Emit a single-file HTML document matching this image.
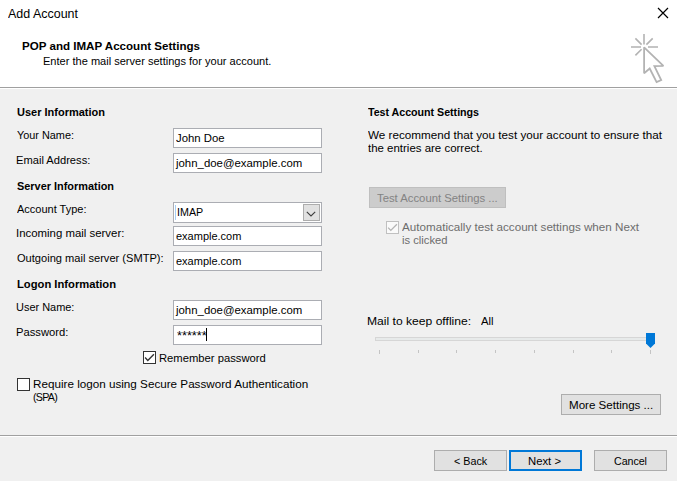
<!DOCTYPE html>
<html><head><meta charset="utf-8"><title>Add Account</title>
<style>
html,body{margin:0;padding:0}
body{width:677px;height:481px;overflow:hidden;background:#f0f0f0;font-family:"Liberation Sans",sans-serif;position:relative;color:#000}
.abs{position:absolute;box-sizing:border-box}
.t{position:absolute;white-space:pre;line-height:16px;height:16px;transform-origin:0 0}
.hdr{left:0;top:0;width:677px;height:87px;background:#fff}
.hl{left:0;width:677px;height:1px}
.inp{left:173px;width:149px;height:20px;background:#fff;border:1px solid #abadb3}
.btn{background:#e1e1e1;border:1px solid #adadad}
.cb{width:13px;height:13px;background:#fff;border:1px solid #333}
</style></head>
<body>
<div class="abs hdr"></div>
<div class="abs hl" style="top:87px;background:#a0a0a0"></div>
<div class="abs hl" style="top:88px;background:#fff"></div>
<div class="abs hl" style="top:436px;background:#fff"></div>
<div class="abs hl" style="top:435px;background:#a0a0a0"></div>
<div class="abs inp" style="top:128px"></div>
<div class="abs inp" style="top:153px"></div>
<div class="abs inp" style="top:226px"></div>
<div class="abs inp" style="top:251px"></div>
<div class="abs inp" style="top:300px"></div>
<div class="abs inp" style="top:325px"></div>
<div class="abs inp" style="top:202px;height:21px"></div>
<div class="abs btn" style="left:303px;top:204px;width:17px;height:17px"></div>
<svg class="abs" style="left:303px;top:204px" width="17" height="17" viewBox="0 0 17 17"><path d="M3.8 7.8 L8 12 L12.2 7.8" fill="none" stroke="#3c3c3c" stroke-width="1.1"/></svg>
<div class="abs" style="left:175px;top:205px;width:1px;height:15px;background:#a6cff5"></div>
<div class="abs" style="left:206px;top:328px;width:1px;height:13px;background:#000"></div>
<div class="abs cb" style="left:143px;top:351px"></div>
<svg class="abs" style="left:143px;top:351px" width="13" height="13" viewBox="0 0 13 13"><path d="M2.1 6.6 L4.8 9.4 L10.9 3.3" fill="none" stroke="#333" stroke-width="1.4"/></svg>
<div class="abs cb" style="left:17px;top:378px"></div>
<div class="abs cb" style="left:386px;top:221px;border-color:#c0c0c0;background:#fafafa"></div>
<svg class="abs" style="left:386px;top:221px" width="13" height="13" viewBox="0 0 13 13"><path d="M2.1 6.6 L4.8 9.4 L10.9 3.3" fill="none" stroke="#b4b4b4" stroke-width="1.3"/></svg>
<div class="abs" style="left:369px;top:187px;width:137px;height:21px;background:#cccccc;border:1px solid #bfbfbf"></div>
<div class="abs btn" style="left:561px;top:394px;width:100px;height:21px"></div>
<div class="abs btn" style="left:434px;top:450px;width:73px;height:21px"></div>
<div class="abs btn" style="left:509px;top:450px;width:73px;height:21px;border:2px solid #0078d7"></div>
<div class="abs btn" style="left:594px;top:450px;width:73px;height:21px"></div>
<div class="abs" style="left:375px;top:337px;width:274px;height:4px;background:#e7eaea;border:1px solid #d6d6d6"></div>
<div class="abs" style="left:379px;top:350px;width:1px;height:4px;background:#c4c4c4"></div>
<div class="abs" style="left:418px;top:350px;width:1px;height:3px;background:#c4c4c4"></div>
<div class="abs" style="left:456px;top:350px;width:1px;height:3px;background:#c4c4c4"></div>
<div class="abs" style="left:495px;top:350px;width:1px;height:3px;background:#c4c4c4"></div>
<div class="abs" style="left:534px;top:350px;width:1px;height:3px;background:#c4c4c4"></div>
<div class="abs" style="left:573px;top:350px;width:1px;height:3px;background:#c4c4c4"></div>
<div class="abs" style="left:611px;top:350px;width:1px;height:3px;background:#c4c4c4"></div>
<div class="abs" style="left:650px;top:350px;width:1px;height:4px;background:#c4c4c4"></div>
<svg class="abs" style="left:646px;top:333px" width="10" height="16" viewBox="0 0 10 16"><path d="M0 0 H9 V10.5 L4.5 15 L0 10.5 Z" fill="#0078d7"/></svg>
<svg class="abs" style="left:657px;top:7px" width="12" height="12" viewBox="0 0 12 12"><path d="M1 1 L11 11 M11 1 L1 11" fill="none" stroke="#000" stroke-width="1.2"/></svg>
<svg class="abs" style="left:625px;top:28px" width="47" height="60" viewBox="625 28 47 60">
<g fill="none" stroke="#b3b3b3" stroke-width="1.6">
<path d="M644 34 V44.5 M631 47 H641 M648 47 H658 M635.4 38.4 L641.6 44.6 M652.7 38.4 L646.4 44.6 M635.4 55.4 L641.6 49.3"/>
<path d="M644.1 47.3 V73.2 L649.7 68.5 L656.6 82.1 L661.2 80 L654.4 66.1 L663.4 65.9 Z" fill="#fff" stroke-linejoin="miter" stroke-miterlimit="2" stroke-width="1.8"/>
</g></svg>
<span class="t" style="left:8.00px;top:5.67px;font-size:12.5px;transform:scaleX(0.9971);">Add Account</span>
<span class="t" style="left:22.00px;top:37.99px;font-size:11px;transform:scaleX(1.0526);font-weight:bold;">POP and IMAP Account Settings</span>
<span class="t" style="left:42.70px;top:53.19px;font-size:11px;transform:scaleX(1.0038);">Enter the mail server settings for your account.</span>
<span class="t" style="left:17.00px;top:104.02px;font-size:11.5px;transform:scaleX(0.9564);font-weight:bold;">User Information</span>
<span class="t" style="left:17.00px;top:127.02px;font-size:11.5px;transform:scaleX(0.9451);">Your Name:</span>
<span class="t" style="left:16.20px;top:152.02px;font-size:11.5px;transform:scaleX(0.9687);">Email Address:</span>
<span class="t" style="left:17.00px;top:178.02px;font-size:11.5px;transform:scaleX(0.9487);font-weight:bold;">Server Information</span>
<span class="t" style="left:17.00px;top:201.02px;font-size:11.5px;transform:scaleX(0.9564);">Account Type:</span>
<span class="t" style="left:16.20px;top:225.02px;font-size:11.5px;transform:scaleX(0.9918);">Incoming mail server:</span>
<span class="t" style="left:17.00px;top:250.02px;font-size:11.5px;transform:scaleX(0.9638);">Outgoing mail server (SMTP):</span>
<span class="t" style="left:17.00px;top:276.02px;font-size:11.5px;transform:scaleX(0.9746);font-weight:bold;">Logon Information</span>
<span class="t" style="left:16.20px;top:299.02px;font-size:11.5px;transform:scaleX(0.9518);">User Name:</span>
<span class="t" style="left:16.20px;top:324.02px;font-size:11.5px;transform:scaleX(0.9760);">Password:</span>
<span class="t" style="left:176.00px;top:129.72px;font-size:11.5px;transform:scaleX(0.9891);">John Doe</span>
<span class="t" style="left:175.50px;top:154.82px;font-size:11.5px;transform:scaleX(0.9907);">john_doe@example.com</span>
<span class="t" style="left:176.50px;top:203.72px;font-size:11.5px;transform:scaleX(0.9316);">IMAP</span>
<span class="t" style="left:176.20px;top:227.72px;font-size:11.5px;transform:scaleX(0.9563);">example.com</span>
<span class="t" style="left:176.20px;top:252.62px;font-size:11.5px;transform:scaleX(0.9563);">example.com</span>
<span class="t" style="left:175.50px;top:302.02px;font-size:11.5px;transform:scaleX(0.9907);">john_doe@example.com</span>
<span class="t" style="left:176.80px;top:327.94px;font-size:12px;transform:scaleX(1.0595);">******</span>
<span class="t" style="left:158.70px;top:349.62px;font-size:11.5px;transform:scaleX(0.9772);">Remember password</span>
<span class="t" style="left:32.80px;top:375.82px;font-size:11.5px;transform:scaleX(1.0153);">Require logon using Secure Password Authentication</span>
<span class="t" style="left:32.80px;top:389.02px;font-size:11.5px;transform:scaleX(0.9300);letter-spacing:-0.804px;">(SPA)</span>
<span class="t" style="left:368.00px;top:103.82px;font-size:11.5px;transform:scaleX(0.9300);letter-spacing:-0.037px;font-weight:bold;">Test Account Settings</span>
<span class="t" style="left:368.00px;top:127.02px;font-size:11.5px;transform:scaleX(1.0160);">We recommend that you test your account to ensure that</span>
<span class="t" style="left:368.00px;top:140.02px;font-size:11.5px;transform:scaleX(0.9960);">the entries are correct.</span>
<span class="t" style="left:377.00px;top:190.02px;font-size:11.5px;transform:scaleX(0.9834);color:#838383;">Test Account Settings ...</span>
<span class="t" style="left:402.00px;top:218.82px;font-size:11.5px;transform:scaleX(1.0130);color:#6d6d6d;">Automatically test account settings when Next</span>
<span class="t" style="left:402.00px;top:232.22px;font-size:11.5px;transform:scaleX(0.9752);color:#6d6d6d;">is clicked</span>
<span class="t" style="left:367.20px;top:313.02px;font-size:11.5px;transform:scaleX(1.0528);">Mail to keep offline:</span>
<span class="t" style="left:481.40px;top:313.02px;font-size:11.5px;transform:scaleX(0.9858);">All</span>
<span class="t" style="left:568.50px;top:397.32px;font-size:11.5px;transform:scaleX(1.0056);">More Settings ...</span>
<span class="t" style="left:454.40px;top:452.82px;font-size:11.5px;transform:scaleX(0.9356);">&lt; Back</span>
<span class="t" style="left:527.70px;top:452.82px;font-size:11.5px;transform:scaleX(0.9832);">Next &gt;</span>
<span class="t" style="left:613.50px;top:452.82px;font-size:11.5px;transform:scaleX(0.9300);letter-spacing:-0.073px;">Cancel</span>
</body></html>
